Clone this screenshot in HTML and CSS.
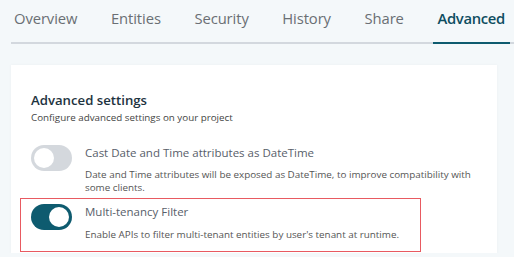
FILE: index.html
```html
<!DOCTYPE html>
<html lang="en">
<head>
  <meta charset="UTF-8" />
  <meta name="viewport" content="width=device-width, initial-scale=1.0" />
  <title>Project settings</title>
  <link rel="stylesheet" href="styles.css">
</head>
<body>
  <nav class="tabs">
    <a class="tab">Overview</a>
    <a class="tab">Entities</a>
    <a class="tab">Security</a>
    <a class="tab">History</a>
    <a class="tab">Share</a>
    <a class="tab active">Advanced</a>
  </nav>

  <!-- Advanced settings card -->
  <section class="card">
    <h2>Advanced settings</h2>
    <p class="subtitle">Configure advanced settings on your project</p>

    <div class="setting">
      <span class="toggle"></span>
      <div class="setting-text">
        <div class="setting-title">Cast Date and Time attributes as DateTime</div>
        <div class="setting-desc">Date and Time attributes will be exposed as DateTime, to improve compatibility with some clients.</div>
      </div>
    </div>

    <div class="setting highlight">
      <span class="toggle on"></span>
      <div class="setting-text">
        <div class="setting-title">Multi-tenancy Filter</div>
        <div class="setting-desc">Enable APIs to filter multi-tenant entities by user's tenant at runtime.</div>
      </div>
    </div>
  </section>
</body>
</html>
```

FILE: styles.css
```css
* { box-sizing: border-box; }
body {
  font-family: 'Open Sans', 'Noto Sans', sans-serif;
  background: #f4f8fa;
  color: #444;
  margin: 0;
  padding: 0 0 0 11px;
  overflow: hidden;
}

/* Tabs */
.tabs {
  display: flex;
  gap: 25.6px;
  height: 44px;
  border-bottom: 2px solid #d3d8de;
}
.tab {
  font-size: 14.8px;
  line-height: 20px;
  padding: 8px 4px 0;
  margin-bottom: -2px;
  color: #6a6f74;
  letter-spacing: -0.1px;
  border-bottom: 2px solid transparent;
}
.tab:first-child { margin-left: -1px; }
.tab.active {
  color: #0d4d60;
  font-weight: 600;
  letter-spacing: -0.3px;
  padding: 8px 5px 0 4px;
  border-bottom-color: #0e5b6f;
}

/* Card */
.card {
  width: 486px;
  margin-top: 21px;
  height: 188px;
  background: #fff;
  padding: 26px 20px 0;
  box-shadow: 0 0 3px rgba(0, 0, 0, 0.04);
}
h2 {
  font-size: 13.2px;
  font-weight: 600;
  color: #1d3340;
  margin: 0;
  line-height: 18px;
}
.subtitle {
  font-size: 9.8px;
  margin: 2px 0 0;
  line-height: 14px;
  color: #444;
}

.setting {
  display: flex;
  gap: 13px;
  margin-top: 20px;
}
.setting-title {
  font-size: 11.5px;
  line-height: 16px;
  color: #58606a;
}
.setting-desc {
  font-size: 9.85px;
  line-height: 13px;
  margin-top: 7px;
  color: #555;
}

.highlight {
  width: 401px;
  margin: 4px 0 0 -11px;
  padding: 5px 10px 10px;
  border: 1.5px solid #e85a61;
}
.highlight .setting-desc { margin-top: 8px; }

/* Toggle */
.toggle {
  flex: none;
  position: relative;
  width: 41px;
  height: 26px;
  border-radius: 13px;
  background: #d4d8dd;
}
.toggle::after {
  content: "";
  position: absolute;
  top: 3px;
  left: 3px;
  width: 20px;
  height: 20px;
  border-radius: 50%;
  background: #fff;
}
.toggle.on { background: #0e5b6f; }
.toggle.on::after { left: 18px; }
```
